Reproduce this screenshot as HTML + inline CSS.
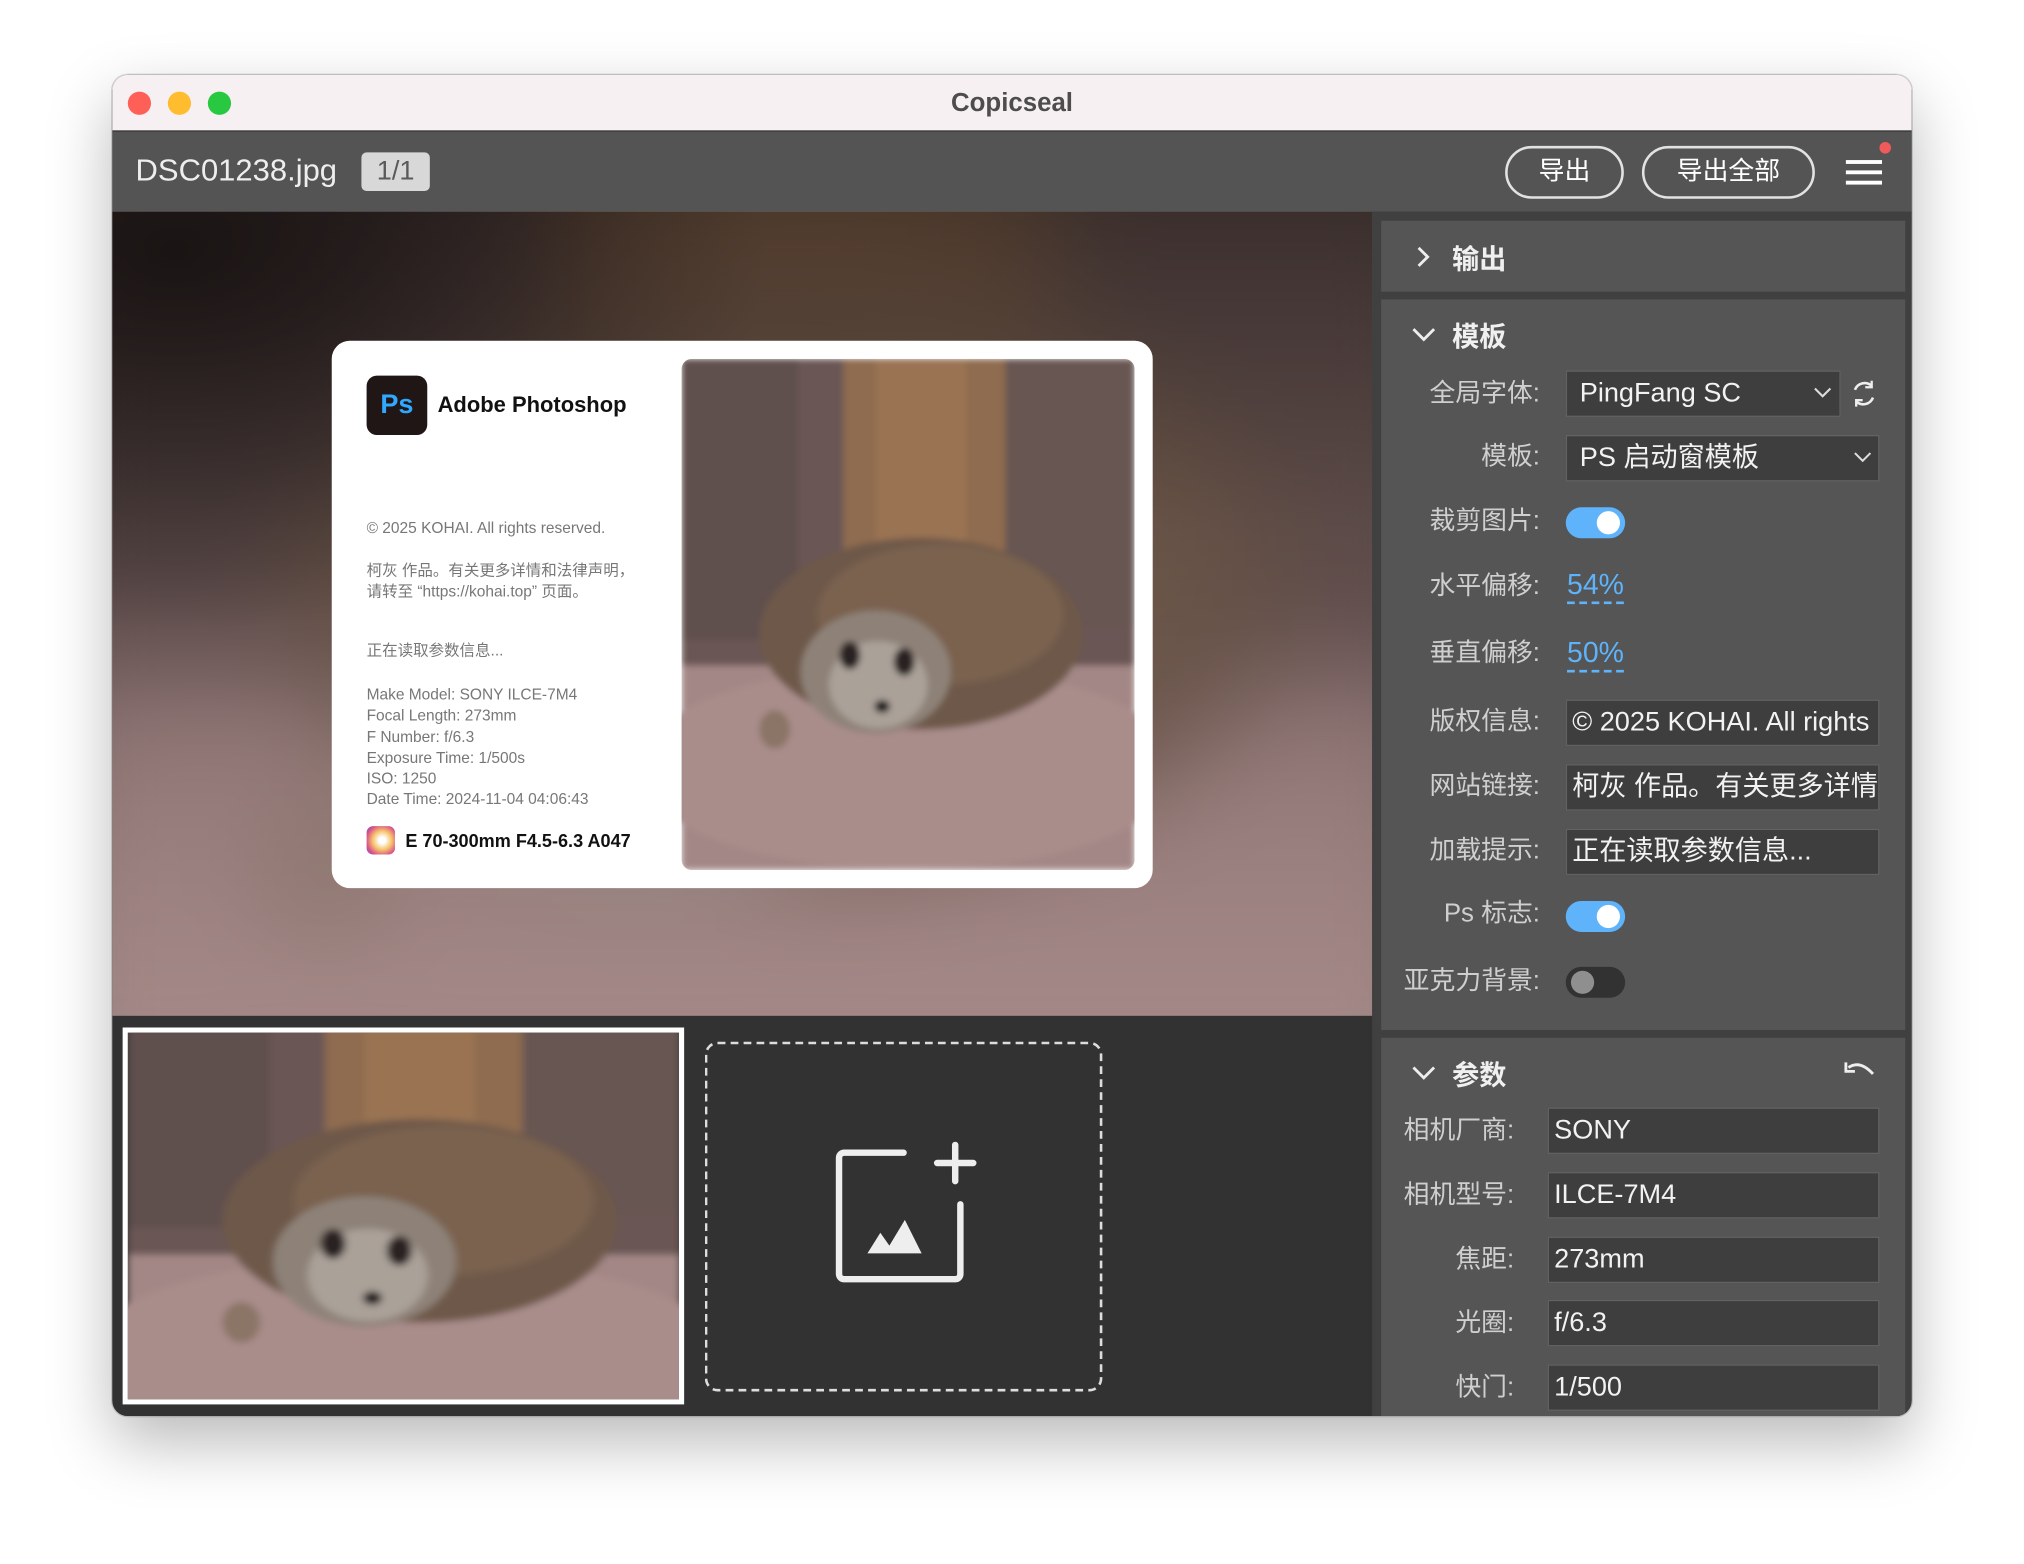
<!DOCTYPE html>
<html><head><meta charset="utf-8"><style>
*{margin:0;padding:0;box-sizing:border-box}
html,body{width:2024px;height:1564px;overflow:hidden;background:#fff}
#s{position:absolute;left:0;top:0;width:1568px;height:1212px;transform:scale(1.29082);transform-origin:0 0;font-family:"Liberation Sans","Noto Sans CJK SC",sans-serif}
.a{position:absolute}
.win{left:87px;top:58px;width:1394px;height:1039px;border-radius:12px;overflow:hidden;box-shadow:0 20px 50px rgba(0,0,0,.28),0 0 0 1px rgba(0,0,0,.15);background:#3a3a3a}
.tl{width:18px;height:18px;border-radius:50%;top:13px}
.lbl{position:absolute;color:#cfcfcf;font-size:20px;text-align:right;line-height:28px}
.inp{position:absolute;background:#3e3e3e;border:1.5px solid #626262;color:#f2f2f2;font-size:21px;line-height:34px;padding-left:4px;overflow:hidden;white-space:nowrap;height:36px}
.tog{position:absolute;width:46px;height:24px;border-radius:12px;background:#5eb3fb}
.tog::after{content:"";position:absolute;right:4px;top:3px;width:18px;height:18px;border-radius:50%;background:#fff}
.off{background:#323232}
.off::after{left:4px;right:auto;background:#8f8f8f}
.panel{position:absolute;left:983px;width:406px;background:#555}
.h{position:absolute;color:#f0f0f0;font-size:21px;font-weight:bold}
.link{position:absolute;color:#5eb3fb;font-size:22px;border-bottom:2px dashed #5eb3fb;line-height:26px}
.ct{color:#777;font-size:12px;line-height:16.3px;position:absolute;left:27px}
</style></head><body><div id="s">
<svg width="0" height="0" style="position:absolute"><defs>
<filter id="bl"><feGaussianBlur stdDeviation="2.5"/></filter>
<symbol id="ph" viewBox="0 0 350 400" preserveAspectRatio="none">
<g filter="url(#bl)">
<rect width="350" height="400" fill="#7a6461"/>
<rect x="0" y="0" width="350" height="240" fill="#6a5654"/>
<rect x="0" y="0" width="90" height="220" fill="#5e504d"/>
<rect x="125" y="0" width="125" height="240" fill="#8f6c50"/>
<rect x="150" y="0" width="70" height="210" fill="#9e7652" opacity=".7"/>
<rect x="250" y="0" width="100" height="210" fill="#685653"/>
<rect x="0" y="240" width="350" height="160" fill="#a38786"/>
<ellipse cx="175" cy="320" rx="210" ry="80" fill="#a98d8b"/>
<ellipse cx="185" cy="215" rx="125" ry="75" fill="#6e5849"/>
<ellipse cx="200" cy="200" rx="95" ry="55" fill="#7a6250"/>
<ellipse cx="150" cy="245" rx="58" ry="48" fill="#8e8278"/>
<ellipse cx="152" cy="255" rx="38" ry="34" fill="#aaa199"/>
<ellipse cx="130" cy="232" rx="8" ry="11" fill="#2a2422"/>
<ellipse cx="172" cy="237" rx="8" ry="11" fill="#2a2422"/>
<ellipse cx="155" cy="272" rx="6" ry="5" fill="#1b1716"/>
<ellipse cx="72" cy="290" rx="12" ry="15" fill="#8b7466"/>
</g>
</symbol></defs></svg>

<div class="a win">
 <div class="a" style="left:0;top:0;width:1394px;height:44px;background:#f7f0f2;border-bottom:1.5px solid #2a2a2a"></div>
 <div class="a tl" style="left:12px;background:#fe5f57"></div>
 <div class="a tl" style="left:43px;background:#febc2e"></div>
 <div class="a tl" style="left:74px;background:#28c840"></div>
 <div class="a" style="left:0;width:1394px;top:10px;text-align:center;font-size:20px;font-weight:bold;color:#4d4d4d;line-height:24px">Copicseal</div>
 <div class="a" style="left:0;top:44px;width:1394px;height:62px;background:#545454"></div>
 <div class="a" style="left:18px;top:61px;font-size:24px;color:#eee;line-height:28px">DSC01238.jpg</div>
 <div class="a" style="left:193px;top:60px;width:53px;height:30px;background:#d8d8d8;border-radius:4px;color:#5a5a5a;font-size:21px;text-align:center;line-height:30px">1/1</div>
 <div class="a" style="left:1079px;top:55px;width:92px;height:41px;border:2px solid #e2e2e2;border-radius:21px;color:#fff;font-size:20px;text-align:center;line-height:37px">导出</div>
 <div class="a" style="left:1185px;top:55px;width:134px;height:41px;border:2px solid #e2e2e2;border-radius:21px;color:#fff;font-size:20px;text-align:center;line-height:37px">导出全部</div>
 <div class="a" style="left:1343px;top:66px;width:28px;height:3px;background:#fff"></div>
 <div class="a" style="left:1343px;top:74px;width:28px;height:3px;background:#fff"></div>
 <div class="a" style="left:1343px;top:82px;width:28px;height:3px;background:#fff"></div>
 <div class="a" style="left:1369px;top:52px;width:9px;height:9px;border-radius:50%;background:#f05a5a"></div>
 <div class="a" style="left:0;top:106px;width:976px;height:623px;overflow:hidden;background:#5b4a48">
  <svg class="a" style="left:-60px;top:-60px;filter:blur(40px)" width="1100" height="760"><use href="#ph" width="1100" height="1200" y="-300"/></svg>
  <div class="a" style="left:0;top:0;width:976px;height:623px;background:radial-gradient(ellipse at 5% 5%,rgba(20,15,15,.85),transparent 35%),linear-gradient(180deg,rgba(30,22,20,.6),rgba(70,55,55,.35) 40%,rgba(150,125,125,.3))"></div>
  <div class="a" style="left:170px;top:100px;width:636px;height:424px;background:#fff;border-radius:14px">
   <div class="a" style="left:27px;top:27px;width:47px;height:46px;background:#211616;border-radius:8px;color:#31a8ff;font-weight:bold;font-size:21px;text-align:center;line-height:46px">Ps</div>
   <div class="a" style="left:82px;top:40px;font-size:17px;font-weight:bold;color:#111">Adobe Photoshop</div>
   <div class="ct" style="top:137px">© 2025 KOHAI. All rights reserved.</div>
   <div class="ct" style="top:170px">柯灰 作品。有关更多详情和法律声明，<br>请转至 “https://kohai.top” 页面。</div>
   <div class="ct" style="top:232px">正在读取参数信息...</div>
   <div class="ct" style="top:266px">Make Model: SONY ILCE-7M4<br>Focal Length: 273mm<br>F Number: f/6.3<br>Exposure Time: 1/500s<br>ISO: 1250<br>Date Time: 2024-11-04 04:06:43</div>
   <div class="a" style="left:27px;top:376px;width:22px;height:22px;border-radius:5px;background:radial-gradient(circle at 55% 50%,#fff 15%,#f6c36a 45%,#d8508a 75%,#6b5be0)"></div>
   <div class="a" style="left:57px;top:379px;font-size:14px;font-weight:bold;color:#111">E 70-300mm F4.5-6.3 A047</div>
   <svg class="a" style="left:271px;top:14px;border-radius:8px" width="351" height="396"><use href="#ph" width="351" height="396"/></svg>
  </div>
 </div>
 <div class="a" style="left:0;top:729px;width:976px;height:310px;background:#323232"></div>
 <div class="a" style="left:8px;top:738px;width:435px;height:292px;border:4px solid #fff;overflow:hidden"><svg width="428" height="285"><use href="#ph" width="428" height="420" y="-80"/></svg></div>
 <div class="a" style="left:459px;top:749px;width:308px;height:271px;border:2px dashed #ddd;border-radius:10px"></div>
 <svg class="a" style="left:555px;top:825px" width="115" height="115" viewBox="0 0 115 115">
  <path d="M58 10 H12 a4 4 0 0 0 -4 4 V104 a4 4 0 0 0 4 4 H98 a4 4 0 0 0 4 -4 V50" fill="none" stroke="#eee" stroke-width="5" stroke-linecap="round"/>
  <path d="M98 4 V32 M84 18 H112" stroke="#eee" stroke-width="5" stroke-linecap="round"/>
  <path d="M30 88 L40 72 L47 82 L59 62 L72 88 Z" fill="#eee"/>
 </svg>
 <div class="a" style="left:976px;top:106px;width:418px;height:933px;background:#404040"></div>
 <div class="panel" style="top:113px;height:55px"></div>
 <svg class="a" style="left:1008px;top:132px" width="16" height="18"><path d="M4 2 L11 9 L4 16" fill="none" stroke="#eee" stroke-width="2.2"/></svg>
 <div class="h" style="left:1038px;top:127px">输出</div>
 <div class="panel" style="top:174px;height:566px"></div>
 <svg class="a" style="left:1006px;top:194px" width="20" height="14"><path d="M2 3 L10 11 L18 3" fill="none" stroke="#eee" stroke-width="2.2"/></svg>
 <div class="h" style="left:1038px;top:187px">模板</div>
 <div class="lbl" style="left:986px;width:120px;top:233px">全局字体:</div>
 <div class="inp" style="left:1126px;top:229px;width:213px">&nbsp;PingFang SC</div>
 <svg class="a" style="left:1317px;top:240px" width="16" height="12"><path d="M2 3 L8 9 L14 3" fill="none" stroke="#ddd" stroke-width="1.6"/></svg>
 <svg class="a" style="left:1346px;top:236px" width="22" height="22"><path d="M4 8 A8 8 0 0 1 17 5 M18 14 A8 8 0 0 1 5 17" fill="none" stroke="#eee" stroke-width="2"/><path d="M17 1 V6 H12 M5 21 V16 H10" fill="none" stroke="#eee" stroke-width="1.8"/></svg>
 <div class="lbl" style="left:986px;width:120px;top:282px">模板:</div>
 <div class="inp" style="left:1126px;top:279px;width:243px">&nbsp;PS 启动窗模板</div>
 <svg class="a" style="left:1348px;top:290px" width="16" height="12"><path d="M2 3 L8 9 L14 3" fill="none" stroke="#ddd" stroke-width="1.6"/></svg>
 <div class="lbl" style="left:986px;width:120px;top:332px">裁剪图片:</div>
 <div class="tog" style="left:1126px;top:335px"></div>
 <div class="lbl" style="left:986px;width:120px;top:382px">水平偏移:</div>
 <div class="link" style="left:1127px;top:382px">54%</div>
 <div class="lbl" style="left:986px;width:120px;top:434px">垂直偏移:</div>
 <div class="link" style="left:1127px;top:435px">50%</div>
 <div class="lbl" style="left:986px;width:120px;top:487px">版权信息:</div>
 <div class="inp" style="left:1126px;top:484px;width:243px">© 2025 KOHAI. All rights reserved.</div>
 <div class="lbl" style="left:986px;width:120px;top:537px">网站链接:</div>
 <div class="inp" style="left:1126px;top:534px;width:243px">柯灰 作品。有关更多详情和法律声明</div>
 <div class="lbl" style="left:986px;width:120px;top:587px">加载提示:</div>
 <div class="inp" style="left:1126px;top:584px;width:243px">正在读取参数信息...</div>
 <div class="lbl" style="left:986px;width:120px;top:636px">Ps 标志:</div>
 <div class="tog" style="left:1126px;top:640px"></div>
 <div class="lbl" style="left:986px;width:120px;top:688px">亚克力背景:</div>
 <div class="tog off" style="left:1126px;top:691px"></div>
 <div class="panel" style="top:746px;height:300px"></div>
 <svg class="a" style="left:1006px;top:766px" width="20" height="14"><path d="M2 3 L10 11 L18 3" fill="none" stroke="#eee" stroke-width="2.2"/></svg>
 <div class="h" style="left:1038px;top:759px">参数</div>
 <svg class="a" style="left:1340px;top:762px" width="28" height="20"><path d="M5 7 Q14 1 24 12" fill="none" stroke="#eee" stroke-width="2.2"/><path d="M3 3 V10 H10" fill="none" stroke="#eee" stroke-width="2.2"/></svg>
 <div class="lbl" style="left:966px;width:120px;top:804px">相机厂商:</div>
 <div class="inp" style="left:1112px;top:800px;width:257px">SONY</div>
 <div class="lbl" style="left:966px;width:120px;top:854px">相机型号:</div>
 <div class="inp" style="left:1112px;top:850px;width:257px">ILCE-7M4</div>
 <div class="lbl" style="left:966px;width:120px;top:904px">焦距:</div>
 <div class="inp" style="left:1112px;top:900px;width:257px">273mm</div>
 <div class="lbl" style="left:966px;width:120px;top:953px">光圈:</div>
 <div class="inp" style="left:1112px;top:949px;width:257px">f/6.3</div>
 <div class="lbl" style="left:966px;width:120px;top:1003px">快门:</div>
 <div class="inp" style="left:1112px;top:999px;width:257px">1/500</div>
</div>
</div></body></html>
